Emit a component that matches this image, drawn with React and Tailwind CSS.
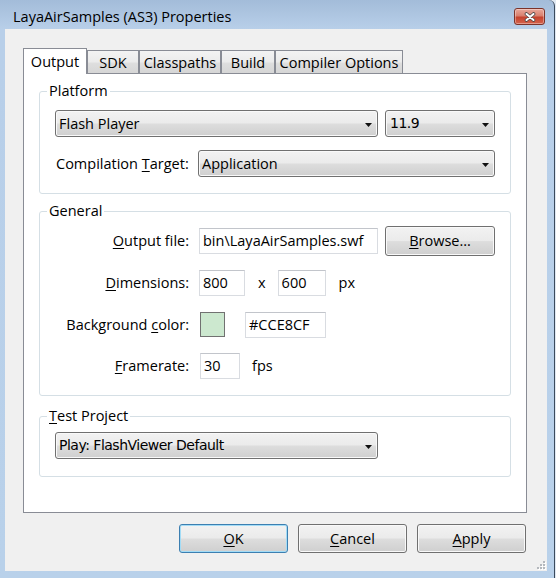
import clsx from "clsx";

const face =
  "bg-[linear-gradient(to_bottom,#f2f2f2_0%,#ebebeb_48%,#dddddd_52%,#cfcfcf_100%)]";

function Combo({ className, textClass, children }) {
  return (
    <div
      className={clsx(
        "flex h-[27px] items-center rounded-[3px] border border-[#707070] pl-[3px] pr-[5px] shadow-[inset_0_0_0_1px_#f9f9f9]",
        face,
        className
      )}
    >
      <span className={clsx("flex-1 truncate", textClass)}>{children}</span>
      <svg width="7" height="4" viewBox="0 0 7 4" className="mt-[2px] shrink-0">
        <path d="M0 0h7L3.5 4z" fill="#111" />
      </svg>
    </div>
  );
}

function Button({ className, primary, children }) {
  return (
    <button
      className={clsx(
        "flex items-center justify-center rounded-[3px] border",
        primary
          ? "border-[#3c7fb1] shadow-[inset_0_0_0_1px_#a3dcf6]"
          : "border-[#707070] shadow-[inset_0_0_0_1px_#f9f9f9]",
        face,
        className
      )}
    >
      {children}
    </button>
  );
}

function TextBox({ className, children }) {
  return (
    <div
      className={clsx(
        "flex h-[26px] items-center border border-[#d9dce1] border-t-[#c2c5cb] bg-white pl-[3px]",
        className
      )}
    >
      {children}
    </div>
  );
}

const Key = ({ children }) => <span className="underline underline-offset-[2px]">{children}</span>;

const Label = ({ children }) => (
  <div className="w-[149px] shrink-0 text-right">{children}</div>
);

const tabs = [
  { name: "Output", w: "w-[64px]", active: true },
  { name: "SDK", w: "w-[52px]" },
  { name: "Classpaths", w: "w-[82px]" },
  { name: "Build", w: "w-[54px]" },
  { name: "Compiler Options", w: "w-[128px]" },
];

export default function App() {
  return (
    <div className="h-[578px] w-[556px] overflow-hidden bg-[#dfe8f2] pr-[1px] font-['Open_Sans',sans-serif] text-[14.5px] text-black">
      <div className="flex h-full flex-col rounded-tr-[6px] border-r border-[#3b4a5c] bg-[linear-gradient(to_bottom,#a3bcd9_0px,#b8cfe9_29px,#b9d1ea_100%)] pb-[7px] pl-[5px] pr-[7px]">
        {/* title bar */}
        <div className="flex h-[29px] shrink-0 items-center pl-[8px] pt-[4px]">
          <span>LayaAirSamples (AS3) Properties</span>
          <div className="ml-auto mr-[2px] flex h-[17px] w-[31px] items-center justify-center rounded-[3px] border border-[#7c332a] bg-[linear-gradient(to_bottom,#e9a89a_0%,#d9806e_45%,#c5432e_55%,#d5634c_100%)] shadow-[inset_0_0_0_1px_rgba(255,255,255,0.35)]">
            <svg width="12" height="10" viewBox="0 0 12 10">
              <path d="M2.5 2 9.5 8M9.5 2 2.5 8" stroke="#4a4a4a" strokeWidth="3.6" strokeLinecap="round" />
              <path d="M2.5 2 9.5 8M9.5 2 2.5 8" stroke="#fff" strokeWidth="2" strokeLinecap="round" />
            </svg>
          </div>
        </div>

        {/* client */}
        <div className="relative flex flex-1 flex-col bg-[#f0f0f0] pl-[18px] pr-[20px] pt-[19px]">
          <div className="flex h-[25px] items-end">
            {tabs.map((t) => (
              <div
                key={t.name}
                className={clsx(
                  "flex shrink-0 items-center justify-center border border-b-0 border-[#898c95]",
                  t.w,
                  t.active
                    ? "relative z-10 -mb-px h-[26px] bg-white"
                    : "h-[23px] bg-[linear-gradient(to_bottom,#f3f3f3_0%,#ebebeb_50%,#dedede_55%,#d6d6d6_100%)] pt-[2px]"
                )}
              >
                {t.name}
              </div>
            ))}
          </div>

          <div className="h-[440px] border border-[#898c95] bg-white px-[15px] pt-[7px]">
            {/* Platform */}
            <fieldset className="h-[113px] rounded-[3px] border border-[#d5dfe5]">
              <legend className="ml-[7px] px-[2px] leading-[20px]">Platform</legend>
              <div className="px-[15px] pt-[9px]">
                <div className="flex gap-[7px]">
                  <Combo className="w-[323px]">Flash Player</Combo>
                  <Combo className="w-[110px] pl-[4px]" textClass="font-['DejaVu_Sans',sans-serif] text-[14px] tracking-[-0.5px]">
                    11.9
                  </Combo>
                </div>
                <div className="mt-[13px] flex items-center">
                  <div className="w-[143px] shrink-0 pl-[1px]">
                    Compilation <Key>T</Key>arget:
                  </div>
                  <Combo className="w-[297px]">Application</Combo>
                </div>
              </div>
            </fieldset>

            {/* General */}
            <fieldset className="mt-[7px] h-[195px] rounded-[3px] border border-[#d5dfe5]">
              <legend className="ml-[7px] px-[2px] leading-[20px]">General</legend>
              <div className="flex h-[30px] items-center mt-[5px]">
                <Label>
                  <Key>O</Key>utput file:
                </Label>
                <TextBox className="ml-[10px] w-[179px]">bin\LayaAirSamples.swf</TextBox>
                <Button className="ml-[7px] h-[30px] w-[110px]">
                  <Key>B</Key>rowse...
                </Button>
              </div>
              <div className="mt-[14px] flex h-[26px] items-center">
                <Label>
                  <Key>D</Key>imensions:
                </Label>
                <TextBox className="ml-[10px] w-[46px]">800</TextBox>
                <span className="ml-[13px]">x</span>
                <TextBox className="ml-[12px] w-[48px]">600</TextBox>
                <span className="ml-[13px]">px</span>
              </div>
              <div className="mt-[15px] flex h-[27px] items-center">
                <Label>
                  Background <Key>c</Key>olor:
                </Label>
                <div className="ml-[11px] h-[25px] w-[25px] border border-[#717171] bg-[#cce8cf]" />
                <TextBox className="ml-[20px] w-[81px]">#CCE8CF</TextBox>
              </div>
              <div className="mt-[15px] flex h-[26px] items-center">
                <Label>
                  <Key>F</Key>ramerate:
                </Label>
                <TextBox className="ml-[11px] w-[40px]">30</TextBox>
                <span className="ml-[12px]">fps</span>
              </div>
            </fieldset>

            {/* Test Project */}
            <fieldset className="mt-[10px] h-[71px] rounded-[3px] border border-[#d5dfe5]">
              <legend className="ml-[7px] px-[2px] leading-[20px]">
                <Key>T</Key>est Project
              </legend>
              <div className="px-[15px] pt-[6px]">
                <Combo className="w-[323px]" textClass="font-['DejaVu_Sans',sans-serif] text-[14px] tracking-[-0.5px]">
                  Play: FlashViewer Default
                </Combo>
              </div>
            </fieldset>
          </div>

          <div className="mt-[11px] flex justify-end gap-[10px] pr-[1px]">
            <Button primary className="h-[29px] w-[109px]">
              <Key>O</Key>K
            </Button>
            <Button className="h-[29px] w-[109px]">
              <Key>C</Key>ancel
            </Button>
            <Button className="h-[29px] w-[109px]">
              <Key>A</Key>pply
            </Button>
          </div>

          <svg width="9" height="9" viewBox="0 0 9 9" className="absolute bottom-[1px] right-[1px]">
            {[
              [6, 0],
              [3, 3],
              [6, 3],
              [0, 6],
              [3, 6],
              [6, 6],
            ].map(([x, y]) => (
              <g key={`${x}-${y}`}>
                <rect x={x + 1} y={y + 1} width="2" height="2" fill="#fff" />
                <rect x={x} y={y} width="2" height="2" fill="#b4b8bd" />
              </g>
            ))}
          </svg>
        </div>
      </div>
    </div>
  );
}
